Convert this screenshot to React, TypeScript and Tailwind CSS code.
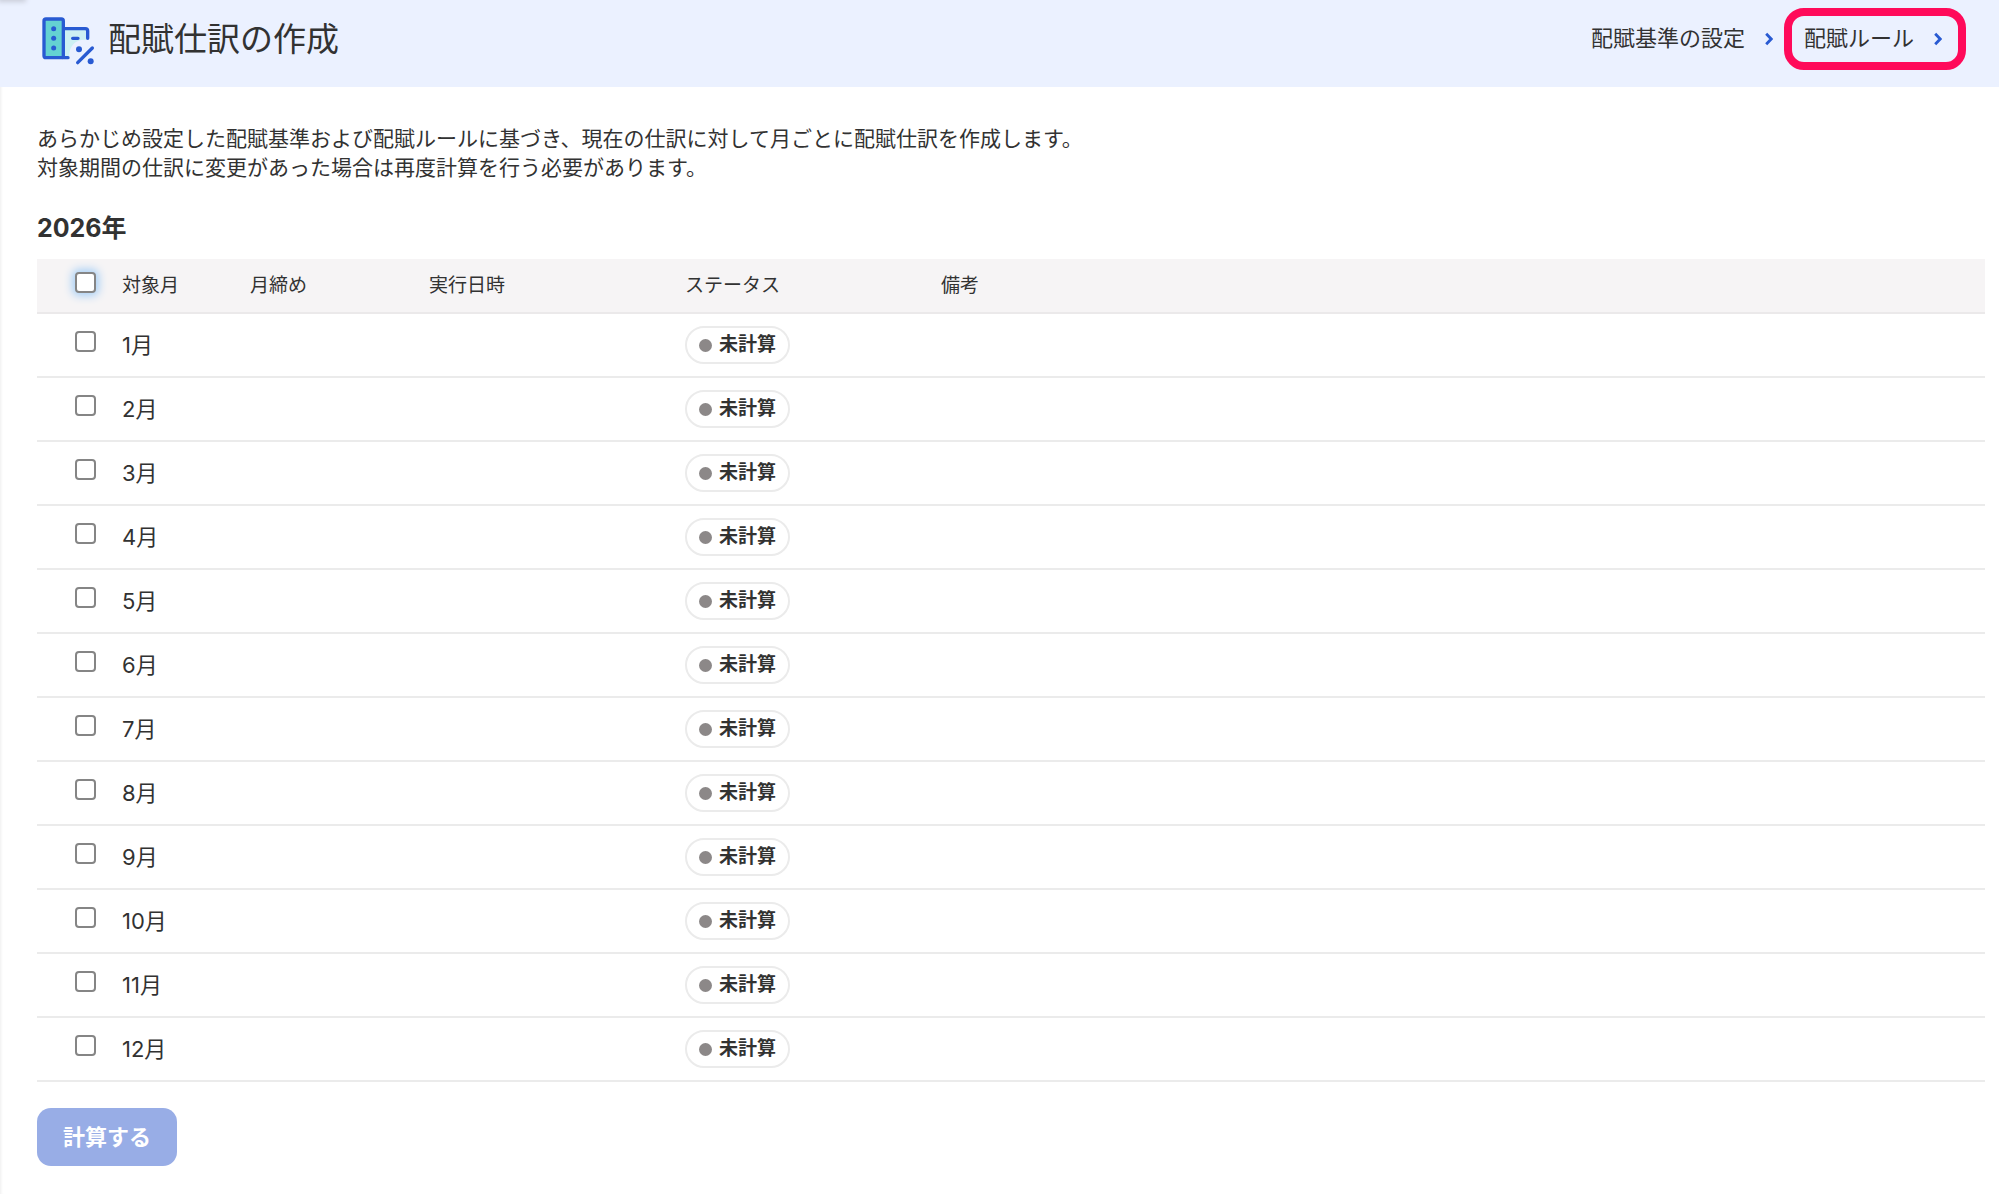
const months = Array.from({ length: 12 }, (_, i) => `${i + 1}月`);

const columns = [
  { label: "対象月", width: "w-[128px]" },
  { label: "月締め", width: "w-[179px]" },
  { label: "実行日時", width: "w-[256px]" },
  { label: "ステータス", width: "w-[256px]" },
  { label: "備考", width: "" }
];

const checkboxClass = "block size-[21px] appearance-none rounded-[4px] border-2 border-[#858585] bg-white checked:bg-[#285ac8]";

export default function App() {
  return (
    <div className="relative min-h-screen overflow-hidden bg-white font-['Inter','Noto_Sans_CJK_JP',sans-serif] text-[#323232] shadow-[inset_3px_0_3px_-2px_#eeeeee]">
      <div className="absolute -top-2 left-0 h-2 w-6 shadow-[0_0_5px_2px_#c9cdd9]" />
      <PageHeader />
      <main className="pt-[37px] pr-[14px] pb-7 pl-[37px]">
        <p className="text-[21px] leading-[29px]">
          あらかじめ設定した配賦基準および配賦ルールに基づき、現在の仕訳に対して月ごとに配賦仕訳を作成します。
          <br />
          対象期間の仕訳に変更があった場合は再度計算を行う必要があります。
        </p>
        <h2 className="mt-[28px] mb-[13px] text-[25px] leading-[36px] font-bold">2026年</h2>
        <MonthTable />
        <button type="button" className="mt-[26px] h-[58px] rounded-[14px] bg-[#98ade6] px-[26px] text-[22px] font-bold text-white">
          計算する
        </button>
      </main>
    </div>
  );
}

function PageHeader() {
  return (
    <header className="flex h-[87px] items-center justify-between bg-[#ebf1ff] pr-[33px] pb-[10px] pl-[42px]">
      <div className="flex items-center gap-[13px]">
        <AllocationIcon />
        <h1 className="text-[33px] leading-[48px]">配賦仕訳の作成</h1>
      </div>
      <nav className="flex items-center gap-[11px] text-[22px]">
        <a href="#criteria" className="flex items-center gap-[20px]">
          配賦基準の設定
          <Chevron />
        </a>
        <a href="#rules" className="flex h-[62px] items-center gap-[20px] rounded-[20px] border-8 border-[#ff0a5a] pr-4 pl-3">
          配賦ルール
          <Chevron />
        </a>
      </nav>
    </header>
  );
}

function MonthTable() {
  return (
    <table className="w-full table-fixed border-collapse text-left">
      <thead>
        <tr className="h-[54px] border-b-2 border-[#ebe9ea] bg-[#f6f4f5] text-[19px]">
          <th className="w-[85px] pb-[6px] pl-[38px]">
            <input type="checkbox" aria-label="すべて選択" className={`${checkboxClass} shadow-[0_0_8px_3px_#a9d0f5]`} />
          </th>
          {columns.map((column) => (
            <th key={column.label} className={`pt-[2px] font-normal ${column.width}`}>
              {column.label}
            </th>
          ))}
        </tr>
      </thead>
      <tbody>
        {months.map((month, i) => (
          <tr key={month} className="h-[64px] border-b-2 border-[#ebebeb]">
            <td className="pb-[7px] pl-[38px]">
              <input type="checkbox" id={`month-${i + 1}`} className={checkboxClass} />
            </td>
            <td className="text-[22px]">
              <label htmlFor={`month-${i + 1}`}>{month}</label>
            </td>
            <td />
            <td />
            <td>
              <StatusBadge label="未計算" />
            </td>
            <td />
          </tr>
        ))}
      </tbody>
    </table>
  );
}

function StatusBadge({ label }: { label: string }) {
  return (
    <span className="flex h-[38px] w-fit items-center gap-[7px] rounded-full border-2 border-[#ebebeb] bg-white px-3 text-[19px] font-bold">
      <span className="size-[13px] rounded-full bg-[#8c8888]" />
      {label}
    </span>
  );
}

function Chevron() {
  return (
    <svg className="h-[14px] w-[8px]" viewBox="0 0 8 14" fill="none" stroke="#285ad2" strokeWidth="2.8">
      <path d="M1.2 1.8 6.2 7 1.2 12.2" />
    </svg>
  );
}

function AllocationIcon() {
  return (
    <svg className="h-[54px] w-[53px]" viewBox="36 21 159 162" fill="none" stroke="#285ad2" strokeWidth="10" strokeLinecap="round" strokeLinejoin="round">
      <path d="M104 72h68v32h-10c-26 0-44 20-44 46v8h-14z" fill="#cdf0f3" stroke="none" />
      <rect x="42" y="42" width="58" height="116" rx="6" fill="#64d2d2" />
      <path d="M104 71h62q7 0 7 7v22" />
      <path d="M100 158h14M128 100h16M143 173l44-44" />
      <g fill="#285ad2" stroke="none">
        <circle cx="71" cy="71" r="7.5" />
        <circle cx="71" cy="100" r="7.5" />
        <circle cx="71" cy="129" r="7.5" />
        <circle cx="147" cy="133" r="9" />
        <circle cx="182" cy="169" r="9" />
      </g>
    </svg>
  );
}
